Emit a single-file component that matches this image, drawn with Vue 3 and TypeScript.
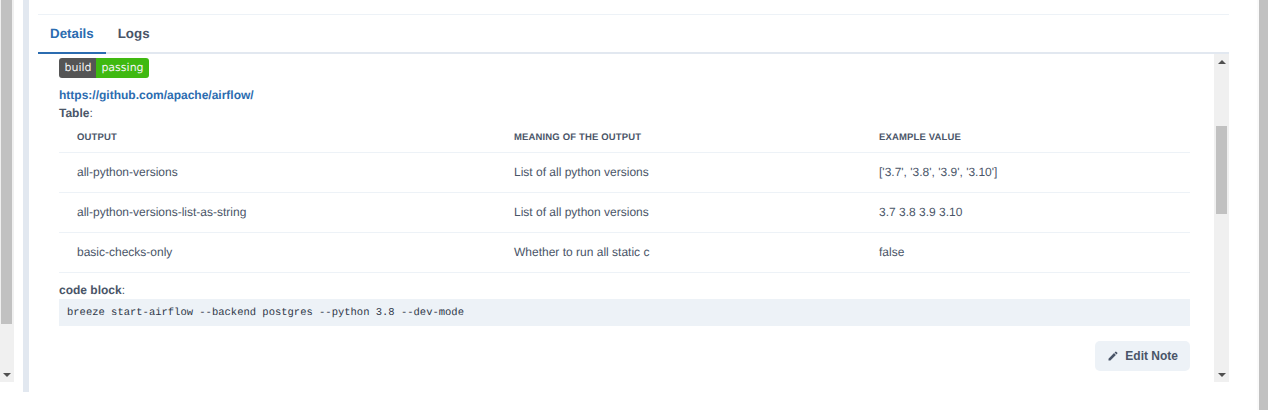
<script setup lang="ts">
interface Row { output: string; meaning: string; example: string }
const rows: Row[] = [
  { output: 'all-python-versions', meaning: 'List of all python versions', example: "['3.7', '3.8', '3.9', '3.10']" },
  { output: 'all-python-versions-list-as-string', meaning: 'List of all python versions', example: '3.7 3.8 3.9 3.10' },
  { output: 'basic-checks-only', meaning: 'Whether to run all static c', example: 'false' },
]
</script>

<template>
  <div class="page">
    <div class="sb outer-left">
      <div class="thumb"></div>
      <div class="spacer"></div>
      <div class="arrow down"></div>
    </div>
    <div class="panel">
      <div class="top-rule"></div>
      <div class="tabs">
        <div class="tab active">Details</div>
        <div class="tab">Logs</div>
      </div>
      <div class="viewport">
        <div class="content">
          <div class="badge"><span class="b-l">build</span><span class="b-r">passing</span></div>
          <a class="link">https://github.com/apache/airflow/</a>
          <p class="label table-label"><b>Table</b>:</p>
          <table>
            <colgroup><col class="c1" /><col class="c2" /><col /></colgroup>
            <thead>
              <tr><th>Output</th><th>Meaning of the Output</th><th>Example value</th></tr>
            </thead>
            <tbody>
              <tr v-for="r in rows" :key="r.output">
                <td>{{ r.output }}</td><td>{{ r.meaning }}</td><td>{{ r.example }}</td>
              </tr>
            </tbody>
          </table>
          <p class="label code-label"><b>code block</b>:</p>
          <pre class="code">breeze start-airflow --backend postgres --python 3.8 --dev-mode</pre>
          <div class="actions">
            <button class="edit">
              <svg width="12" height="12" viewBox="0 0 24 24" fill="currentColor"><path d="M3 17.25V21h3.75L17.81 9.94l-3.75-3.75L3 17.25zM20.71 7.04a1 1 0 0 0 0-1.41l-2.34-2.34a1 1 0 0 0-1.41 0l-1.83 1.83 3.75 3.75 1.83-1.83z"/></svg>
              Edit Note
            </button>
          </div>
        </div>
        <div class="sb inner">
          <div class="arrow up"></div>
          <div class="gap-top"></div>
          <div class="thumb"></div>
          <div class="spacer"></div>
          <div class="arrow down"></div>
        </div>
      </div>
    </div>
    <div class="outer-right"><div class="thumb-right"></div></div>
  </div>
</template>

<style>
html, body { margin: 0; background: #fff; }
</style>

<style scoped>
.page {
  display: flex;
  height: 410px;
  width: 1268px;
  overflow: hidden;
  font-family: "Liberation Sans", Arial, sans-serif;
  font-size: 12px;
  color: #4a5568;
  background: #fff;
  text-rendering: geometricPrecision;
}
.sb {
  background: #f0f0f0;
  display: flex;
  flex-direction: column;
  align-items: center;
  box-sizing: border-box;
}
.sb .thumb { background: #c1c1c1; }
.spacer { flex: 1; }
.arrow { width: 0; height: 0; border-left: 4px solid transparent; border-right: 4px solid transparent; }
.arrow.down { border-top: 4px solid #505050; margin-bottom: 5px; }
.arrow.up { border-bottom: 4px solid #505050; margin-top: 6px; }
.outer-left {
  width: 14px;
  height: 382px;
  flex: none;
}
.outer-left .thumb { width: 11px; height: 324px; margin-left: -1px; }
.panel {
  flex: none;
  width: 1206px;
  height: 392px;
  margin-left: 9px;
  border-left: 6px solid #e2e8f0;
  padding-left: 9px;
  box-sizing: border-box;
  display: flex;
  flex-direction: column;
}
.top-rule { height: 1px; background: #edf2f7; margin-top: 14px; }
.tabs {
  display: flex;
  height: 39px;
  box-sizing: border-box;
  border-bottom: 2px solid #e2e8f0;
  font-weight: 700;
  font-size: 13.33px;
}
.tab {
  padding: 0 12px;
  line-height: 37px;
  height: 39px;
  box-sizing: border-box;
}
.tab.active { color: #2b6cb0; border-bottom: 2px solid #2b6cb0; }
.viewport {
  flex: none;
  height: 328px;
  display: flex;
}
.content {
  flex: 1;
  min-width: 0;
  padding: 4px 24px 0 21px;
  overflow: hidden;
}
.badge {
  display: inline-flex;
  height: 20px;
  border-radius: 3px;
  overflow: hidden;
  font-family: "DejaVu Sans", sans-serif;
  font-size: 11px;
  line-height: 20px;
  color: #f4f4f4;
  vertical-align: top;
}
.b-l { background: #555; width: 37px; text-align: center; text-indent: 1px; }
.b-r { background: #3fb911; width: 53px; text-align: center; }
.link {
  display: block;
  margin-top: 8px;
  font-weight: 700;
  color: #2b6cb0;
  line-height: 18px;
}
.label { margin: 0; line-height: 18px; }
.label b { font-weight: 700; }
.table-label { margin-bottom: 1px; }
table {
  width: 100%;
  border-collapse: collapse;
  table-layout: fixed;
}
.c1 { width: 437px; }
.c2 { width: 365px; }
th {
  text-align: left;
  text-transform: uppercase;
  font-size: 9.5px;
  letter-spacing: 0.15px;
  font-weight: 700;
  height: 29px;
  padding: 0 18px;
  box-sizing: border-box;
  border-bottom: 1px solid #edf2f7;
}
td {
  height: 40px;
  padding: 0 18px;
  box-sizing: border-box;
  border-bottom: 1px solid #edf2f7;
}
.code-label { margin-top: 8px; }
.code {
  margin: 0;
  height: 27px;
  box-sizing: border-box;
  line-height: 26px;
  padding: 1px 8px 0;
  background: #edf2f7;
  font-family: "Liberation Mono", monospace;
  font-size: 10.5px;
  color: #2d3748;
}
.actions { display: flex; justify-content: flex-end; margin-top: 15px; }
.edit {
  display: flex;
  align-items: center;
  gap: 6px;
  height: 30px;
  padding: 0 12px;
  border: 0;
  border-radius: 5px;
  background: #edf2f7;
  color: #4a5568;
  font: 700 12px "Liberation Sans", Arial, sans-serif;
}
.inner { width: 15px; flex: none; }
.gap-top { height: 62px; }
.inner .thumb { width: 11px; height: 88px; }
.outer-right {
  margin-left: 28px;
  width: 11px;
  flex: none;
  height: 410px;
  background: #fafafa;
  display: flex;
  justify-content: flex-end;
}
.thumb-right { width: 9px; background: #c1c1c1; }
</style>
